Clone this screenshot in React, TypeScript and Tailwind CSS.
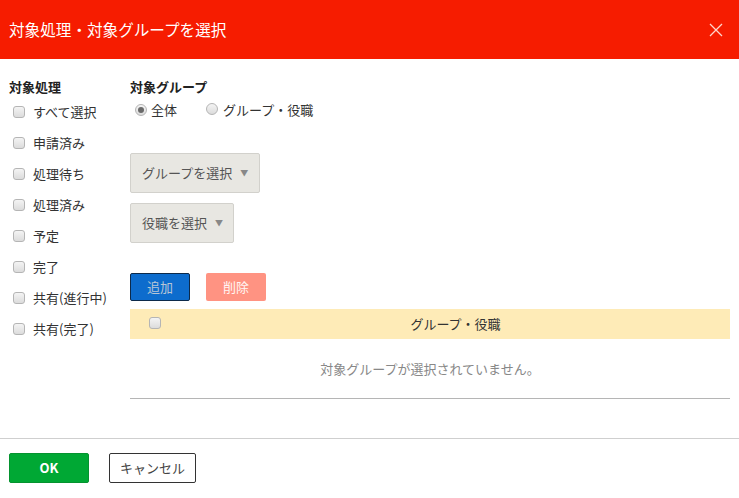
import React from "react";

const font = { fontFamily: '"Noto Sans CJK JP", "Noto Sans", sans-serif' };

const processes = ["すべて選択", "申請済み", "処理待ち", "処理済み", "予定", "完了", "共有(進行中)", "共有(完了)"];

function Box() {
  return (
    <span className="inline-block w-[12px] h-[12px] rounded-[3px] border border-[#b5b5b5] bg-gradient-to-b from-[#f4f4f4] to-[#dcdcdc] shrink-0" />
  );
}

function Radio({ checked }: { checked?: boolean }) {
  return (
    <span className="inline-flex items-center justify-center w-[12px] h-[12px] rounded-full border border-[#b5b5b5] bg-gradient-to-b from-[#f4f4f4] to-[#dcdcdc] shrink-0">
      {checked && <span className="w-[6px] h-[6px] rounded-full bg-[#6a6a6a]" />}
    </span>
  );
}

function Select({ label, width }: { label: string; width: string }) {
  return (
    <div className={`${width} h-[40px] flex items-center gap-[8px] pl-[11px] bg-[#e8e7e2] border border-[#d2d1cc] rounded-[2px] text-[13px] text-[#555]`}>
      <span>{label}</span>
      <span className="text-[8px] text-[#888]">▼</span>
    </div>
  );
}

export default function App() {
  return (
    <div style={font} className="w-[739px] h-[498px] bg-white flex flex-col text-[#333]">
      {/* ヘッダー */}
      <div className="h-[59px] shrink-0 bg-[#f61c00] flex items-center justify-between pl-[9px] pr-[16px]">
        <h1 className="text-[15.6px] text-white">対象処理・対象グループを選択</h1>
        <svg width="14" height="14" viewBox="0 0 14 14" className="text-[#ffd6cc]">
          <path d="M1 1 L13 13 M13 1 L1 13" stroke="currentColor" strokeWidth="1.3" />
        </svg>
      </div>

      {/* 本体 */}
      <div className="h-[380px] shrink-0 flex border-b border-[#cfcfcf] pt-[18px]">
        <div className="w-[130px] pl-[9px] shrink-0">
          <div className="text-[13px] font-bold text-[#222] h-[20px] leading-[20px]">対象処理</div>
          <div className="flex flex-col mt-[2px]">
            {processes.map((p) => (
              <label key={p} className="h-[31px] flex items-center gap-[8px] pl-[4px] pb-[6px] text-[13px] text-[#333]">
                <Box />
                <span>{p}</span>
              </label>
            ))}
          </div>
        </div>

        <div className="flex-1 pr-[9px]">
          <div className="text-[13px] font-bold text-[#222] h-[20px] leading-[20px]">対象グループ</div>
          <div className="flex items-center h-[26px] pl-[5px] text-[13px]">
            <Radio checked />
            <span className="ml-[4px]">全体</span>
            <span className="ml-[29px]"><Radio /></span>
            <span className="ml-[5px]">グループ・役職</span>
          </div>
          <div className="mt-[30px] flex flex-col gap-[10px]">
            <Select label="グループを選択" width="w-[130px]" />
            <Select label="役職を選択" width="w-[104px]" />
          </div>
          <div className="mt-[30px] flex gap-[16px]">
            <button className="w-[60px] h-[28px] bg-[#0d6ccd] border border-[#0d2a4a] rounded-[2px] text-[13px] text-[#b8c6d6]">追加</button>
            <button className="w-[60px] h-[28px] bg-[#ff9382] rounded-[2px] text-[13px] text-[#fff6f4]">削除</button>
          </div>
          <div className="mt-[8px] h-[30px] bg-[#feebb7] flex items-center text-[13px]">
            <span className="pl-[19px]"><Box /></span>
            <span className="flex-1 text-center pl-[20px] text-[#333]">グループ・役職</span>
          </div>
          <div className="h-[60px] flex items-center justify-center text-[13px] text-[#888] border-b border-[#b5b5b5]">
            対象グループが選択されていません。
          </div>
        </div>
      </div>

      {/* フッター */}
      <div className="flex items-center gap-[20px] pl-[9px] pt-[14px]">
        <button className="w-[80px] h-[30px] bg-[#00a834] border border-[#05932f] rounded-[2px] text-[13px] font-bold text-white">OK</button>
        <button className="w-[87px] h-[30px] bg-white border border-[#333] rounded-[2px] text-[13px] text-[#444]">キャンセル</button>
      </div>
    </div>
  );
}
